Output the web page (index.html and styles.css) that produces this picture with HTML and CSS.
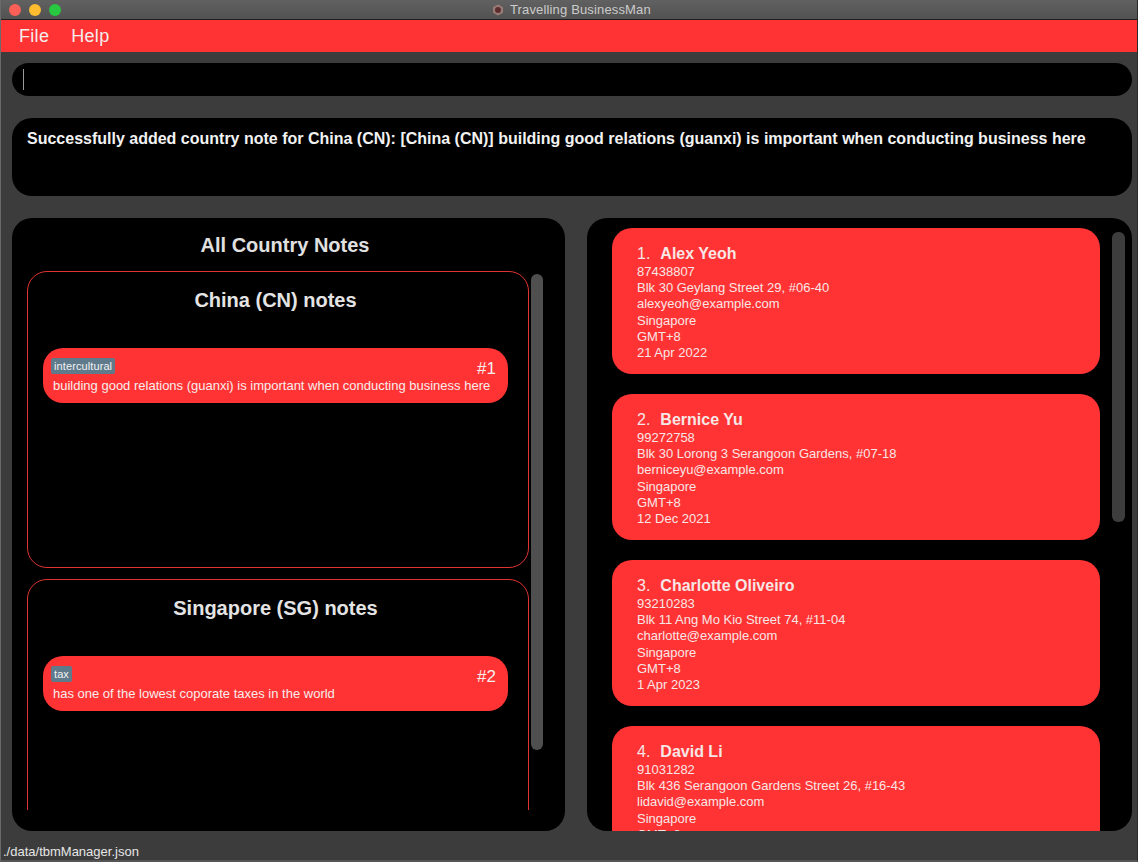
FILE: index.html
```html
<!DOCTYPE html>
<html>
<head>
<meta charset="utf-8">
<link rel="stylesheet" href="styles.css">
</head>
<body>
<div class="window">
  <div class="titlebar">
    <div class="lights">
      <span class="light red"></span>
      <span class="light yellow"></span>
      <span class="light green"></span>
    </div>
    <div class="title">
      <svg class="app-icon" width="12" height="12" viewBox="0 0 12 12"><polygon points="6,0.5 11,3.2 11,8.8 6,11.5 1,8.8 1,3.2" fill="#9a7b78"/><circle cx="6" cy="6" r="3" fill="#5a2e2c"/></svg>
      <span>Travelling BusinessMan</span>
    </div>
  </div>
  <div class="menubar">
    <span class="menu-item">File</span>
    <span class="menu-item">Help</span>
  </div>
  <div class="content">
    <div class="command"><span class="caret"></span></div>
    <div class="result">Successfully added country note for China (CN): [China (CN)] building good relations (guanxi) is important when conducting business here</div>
    <div class="main">
      <section class="panel notes-panel">
        <h1 class="panel-title">All Country Notes</h1>
        <div class="notes-body">
          <div class="notes-list">
            <div class="country-box">
              <h2 class="country-title">China (CN) notes</h2>
              <div class="note-card">
                <div class="note-top">
                  <span class="tag">intercultural</span>
                  <span class="note-index">#1</span>
                </div>
                <div class="note-text">building good relations (guanxi) is important when conducting business here</div>
              </div>
            </div>
            <div class="country-box">
              <h2 class="country-title">Singapore (SG) notes</h2>
              <div class="note-card">
                <div class="note-top">
                  <span class="tag">tax</span>
                  <span class="note-index">#2</span>
                </div>
                <div class="note-text">has one of the lowest coporate taxes in the world</div>
              </div>
            </div>
          </div>
          <div class="scroll-track notes-scroll"><div class="thumb"></div></div>
        </div>
      </section>
      <section class="panel persons-panel">
        <div class="person-list">
          <div class="person-card">
            <div class="person-name"><span class="num">1.</span><b>Alex Yeoh</b></div>
            <div class="line">87438807</div>
            <div class="line">Blk 30 Geylang Street 29, #06-40</div>
            <div class="line">alexyeoh@example.com</div>
            <div class="line">Singapore</div>
            <div class="line">GMT+8</div>
            <div class="line">21 Apr 2022</div>
          </div>
          <div class="person-card">
            <div class="person-name"><span class="num">2.</span><b>Bernice Yu</b></div>
            <div class="line">99272758</div>
            <div class="line">Blk 30 Lorong 3 Serangoon Gardens, #07-18</div>
            <div class="line">berniceyu@example.com</div>
            <div class="line">Singapore</div>
            <div class="line">GMT+8</div>
            <div class="line">12 Dec 2021</div>
          </div>
          <div class="person-card">
            <div class="person-name"><span class="num">3.</span><b>Charlotte Oliveiro</b></div>
            <div class="line">93210283</div>
            <div class="line">Blk 11 Ang Mo Kio Street 74, #11-04</div>
            <div class="line">charlotte@example.com</div>
            <div class="line">Singapore</div>
            <div class="line">GMT+8</div>
            <div class="line">1 Apr 2023</div>
          </div>
          <div class="person-card">
            <div class="person-name"><span class="num">4.</span><b>David Li</b></div>
            <div class="line">91031282</div>
            <div class="line">Blk 436 Serangoon Gardens Street 26, #16-43</div>
            <div class="line">lidavid@example.com</div>
            <div class="line">Singapore</div>
            <div class="line">GMT+8</div>
            <div class="line">10 Jun 2022</div>
          </div>
        </div>
        <div class="scroll-track persons-scroll"><div class="thumb"></div></div>
      </section>
    </div>
    <div class="status">./data/tbmManager.json</div>
  </div>
</div>
</body>
</html>
```

FILE: styles.css
```css
* { box-sizing: border-box; margin: 0; padding: 0; }

html, body {
  width: 1138px;
  height: 862px;
  overflow: hidden;
  background: #3c3c3c;
  font-family: "Liberation Sans", Arial, sans-serif;
}

.window {
  width: 1138px;
  height: 862px;
  display: flex;
  flex-direction: column;
  background: #3c3c3c;
  border-left: 1px solid #6a6a6a;
  border-right: 1px solid #2a2a2a;
  border-bottom: 2px solid #555;
}

.titlebar {
  height: 20px;
  flex: none;
  background: linear-gradient(#616161, #525252);
  border-bottom: 1px solid #1e1e1e;
  display: flex;
  align-items: center;
  position: relative;
}

.lights {
  display: flex;
  gap: 8px;
  padding-left: 8px;
}

.light {
  width: 12px;
  height: 12px;
  border-radius: 50%;
  display: block;
}
.light.red { background: #fe5f57; }
.light.yellow { background: #febc2e; }
.light.green { background: #28c840; }

.title {
  position: absolute;
  left: 491px;
  top: 1px;
  display: flex;
  align-items: center;
  gap: 6px;
  color: #cbcbcb;
  font-size: 13px;
  line-height: 17px;
  letter-spacing: 0.15px;
}

.menubar {
  height: 32px;
  flex: none;
  background: #ff3333;
  display: flex;
  align-items: center;
  padding-left: 18px;
  gap: 22px;
}

.menu-item {
  color: #f4eded;
  font-size: 18px;
  line-height: 20px;
  letter-spacing: 0.3px;
}

.content {
  flex: 1;
  display: flex;
  flex-direction: column;
  padding: 11px 5px 0 11px;
  min-height: 0;
}

.command {
  height: 33px;
  background: #000;
  border-radius: 17px;
  display: flex;
  align-items: center;
  padding-left: 11px;
  flex: none;
}

.caret {
  width: 1px;
  height: 21px;
  background: #9a9a9a;
}

.result {
  margin-top: 22px;
  height: 78px;
  flex: none;
  background: #000;
  border-radius: 20px;
  color: #f2f2f2;
  font-weight: bold;
  font-size: 16px;
  line-height: 20px;
  padding: 11px 15px;
}

.main {
  margin-top: 22px;
  height: 613px;
  flex: none;
  display: flex;
  gap: 22px;
}

.panel {
  background: #000;
  border-radius: 20px;
  overflow: hidden;
}

.notes-panel {
  width: 553px;
  display: flex;
  flex-direction: column;
  padding: 15px 22px 21px 15px;
}

.panel-title {
  text-align: center;
  color: #e0e0e0;
  font-size: 20px;
  font-weight: bold;
  line-height: 24px;
  flex: none;
}

.notes-body {
  margin-top: 14px;
  flex: 1;
  display: flex;
  gap: 2px;
  min-height: 0;
  overflow: hidden;
}

.notes-list {
  width: 502px;
  display: flex;
  flex-direction: column;
  gap: 11px;
}

.country-box {
  height: 297px;
  flex: none;
  border: 1px solid #e03434;
  border-radius: 20px;
  padding: 16px 20px 0 15px;
}

.country-title {
  text-align: center;
  color: #e4e4e4;
  font-size: 20px;
  font-weight: bold;
  line-height: 24px;
}

.note-card {
  margin-top: 36px;
  height: 55px;
  background: #ff3333;
  border-radius: 20px;
  padding: 10px 11px 0 8px;
}

.note-top {
  display: flex;
  justify-content: space-between;
  align-items: flex-start;
  height: 18px;
}

.tag {
  background: #5e7a8b;
  color: #f2f2f2;
  font-size: 11px;
  line-height: 16px;
  padding: 0 3px;
  border-radius: 2px;
  letter-spacing: 0.1px;
}

.note-index {
  color: #f6eded;
  font-size: 17px;
  line-height: 20px;
  margin-top: 1px;
  margin-right: 1px;
}

.note-text {
  color: #f6eded;
  font-size: 13px;
  line-height: 16px;
  margin-top: 2px;
  padding-left: 2px;
}

.scroll-track {
  flex: none;
}

.notes-scroll {
  width: 12px;
  padding-top: 3px;
}

.notes-scroll .thumb {
  height: 476px;
  background: #4f4f4f;
  border-radius: 6px;
}

.persons-panel {
  width: 545px;
  display: flex;
  padding: 10px 7px 0 25px;
  gap: 12px;
}

.person-list {
  width: 488px;
  display: flex;
  flex-direction: column;
  gap: 20px;
}

.person-card {
  height: 146px;
  flex: none;
  background: #ff3333;
  border-radius: 20px;
  padding: 16px 25px 0;
  color: #f6e6e6;
}

.person-name {
  font-size: 16px;
  line-height: 20px;
  display: flex;
  gap: 10px;
}

.person-name b {
  font-weight: bold;
}

.line {
  font-size: 13px;
  line-height: 16.2px;
}

.persons-scroll {
  width: 13px;
  padding-top: 4px;
}

.persons-scroll .thumb {
  height: 290px;
  background: #3d3d3d;
  border-radius: 6px;
}

.status {
  margin-left: -9px;
  margin-top: 13px;
  color: #e6e6e6;
  font-size: 13px;
  line-height: 16px;
}
```
